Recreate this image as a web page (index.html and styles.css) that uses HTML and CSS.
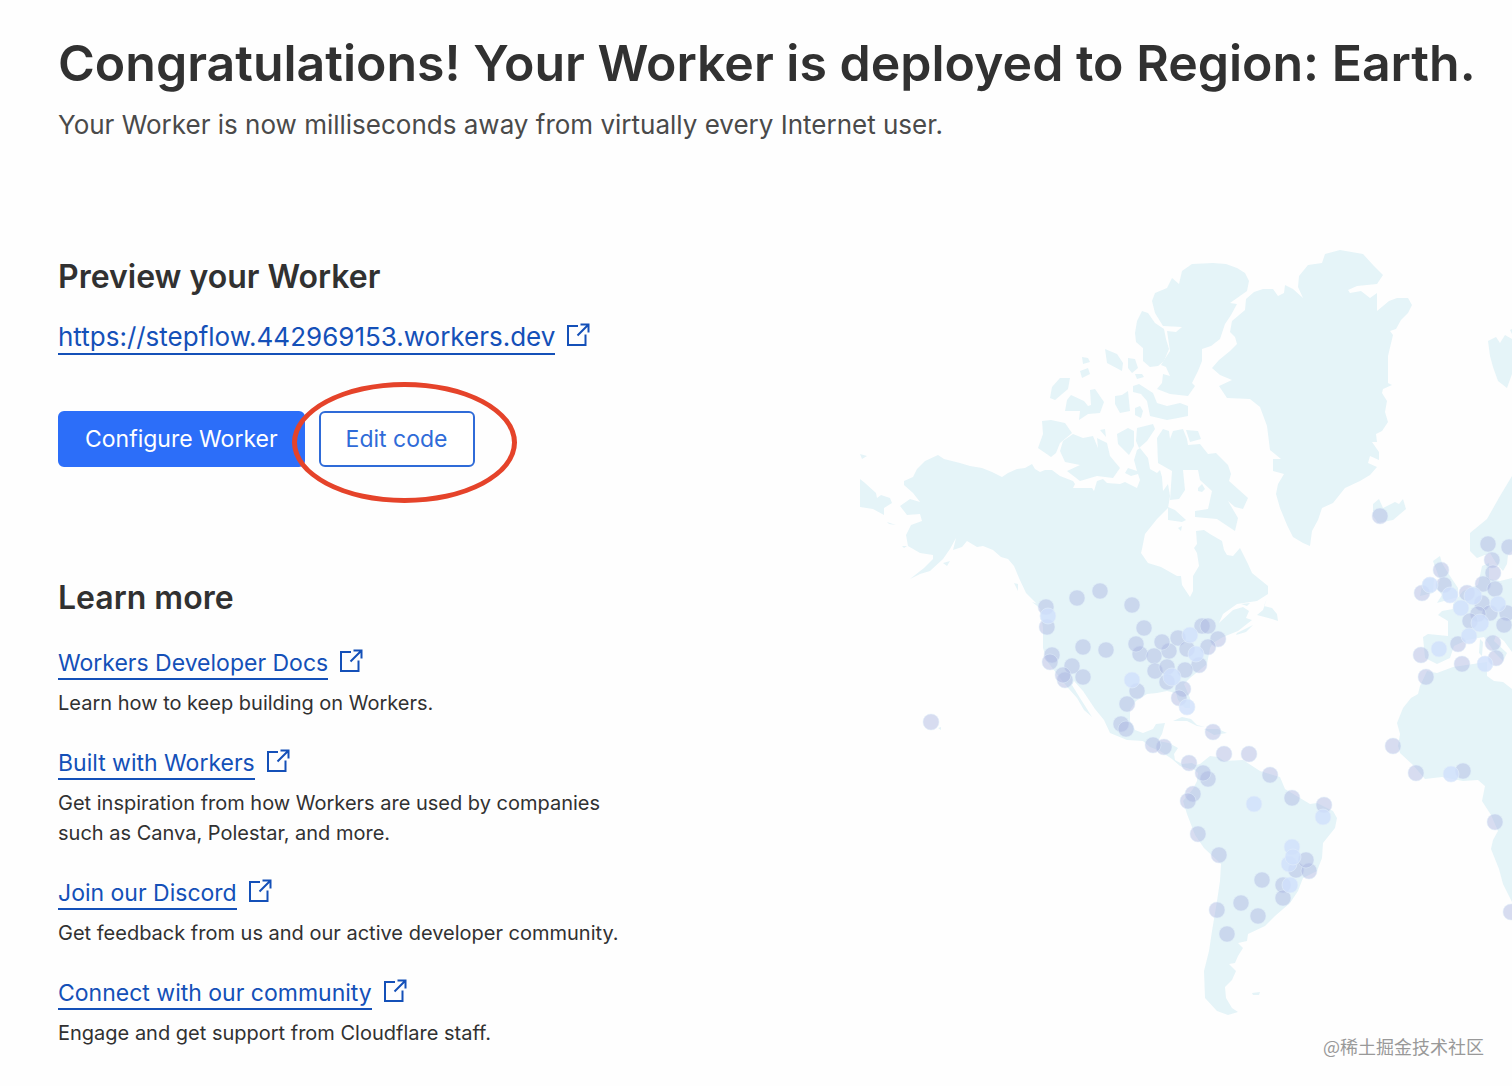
FILE: index.html
```
<!DOCTYPE html>
<html lang="en">
<head>
<meta charset="utf-8">
<meta name="viewport" content="width=device-width, initial-scale=1">
<title>Your Worker is deployed</title>
<link rel="stylesheet" href="styles.css">
</head>
<body>
<svg class="sprite" aria-hidden="true">
  <symbol id="external" viewBox="0 0 24 24">
    <path d="M12 3H2V22H19.500V11.500M14.500 1.500H22.500V9.500M22.500 1.500L11.500 12.500" fill="none" stroke="currentColor" stroke-width="2"/>
  </symbol>
</svg>
<header class="hero">
  <h1 class="hero-title">Congratulations! Your Worker is deployed to Region: Earth.</h1>
  <p class="hero-subtitle">Your Worker is now milliseconds away from virtually every Internet user.</p>
</header>
<main class="content">
  <div class="details">
    <section class="preview">
      <h2 class="section-title">Preview your Worker</h2>
      <a class="link link-large" href="#preview"><span class="link-text">https://stepflow.442969153.workers.dev</span><svg class="icon"><use href="#external"/></svg></a>
      <div class="actions">
        <button class="button button-primary" type="button">Configure Worker</button>
        <div class="highlighted">
          <button class="button button-outline" type="button">Edit code</button>
          <span class="highlight-ring"></span>
        </div>
      </div>
    </section>
    <section class="learn">
      <h2 class="section-title">Learn more</h2>
      <ul class="resources">
        <li class="resource">
          <a class="link" href="#docs"><span class="link-text">Workers Developer Docs</span><svg class="icon"><use href="#external"/></svg></a>
          <p class="resource-text">Learn how to keep building on Workers.</p>
        </li>
        <li class="resource">
          <a class="link" href="#built-with"><span class="link-text">Built with Workers</span><svg class="icon"><use href="#external"/></svg></a>
          <p class="resource-text">Get inspiration from how Workers are used by companies<br>such as Canva, Polestar, and more.</p>
        </li>
        <li class="resource">
          <a class="link" href="#discord"><span class="link-text">Join our Discord</span><svg class="icon"><use href="#external"/></svg></a>
          <p class="resource-text">Get feedback from us and our active developer community.</p>
        </li>
        <li class="resource">
          <a class="link" href="#community"><span class="link-text">Connect with our community</span><svg class="icon"><use href="#external"/></svg></a>
          <p class="resource-text">Engage and get support from Cloudflare staff.</p>
        </li>
      </ul>
    </section>
  </div>
  <div class="world">
    <svg class="map" viewBox="860 240 652 780" role="img" aria-label="Map of data centers">
      <g class="land">
        <!-- North and Central America -->
        <path d="M938 454L944 458L960 462L970 465L982 467L992 471L1002 476L1008 472L1017 468L1025 467L1032 463L1035 468L1040 471L1045 469L1052 469L1060 475L1073 480L1075 483L1073 487L1092 487L1094 490L1097 480L1103 478L1107 482L1120 483L1125 481L1137 487L1140 479L1138 473L1131 475L1125 472L1128 467L1137 470L1134 459L1137 449L1140 447L1148 457L1150 468L1157 472L1160 469L1162 476L1163 490L1168 483L1170 495L1168 507L1157 518L1145 533L1142 548L1141 552L1148 562L1161 566L1177 575L1181 575L1182 584L1190 596L1193 590L1193 575L1199 565L1197 552L1194 547L1197 543L1196 530L1204 529L1210 533L1222 540L1224 549L1227 554L1233 555L1240 547L1248 563L1252 572L1268 585L1268 593L1257 600L1237 603L1223 613L1219 622L1233 609L1243 606L1249 610L1246 617L1252 619L1238 630L1223 636L1213 642L1210 647L1207 663L1190 677L1184 683L1190 697L1190 707L1185 707L1178 699L1176 692L1167 690L1157 692L1147 693L1136 700L1130 709L1130 720L1135 729L1143 732L1153 728L1156 723L1165 722L1162 733L1158 740L1169 742L1178 747L1174 753L1175 759L1182 763L1192 762L1199 766L1190 768L1180 765L1172 758L1160 750L1150 746L1143 740L1127 739L1110 732L1104 719L1095 708L1083 690L1074 680L1072 684L1080 697L1087 708L1092 716L1084 709L1077 697L1069 688L1060 677L1047 660L1043 647L1043 627L1040 607L1035 601L1026 592L1019 577L1014 565L1008 558L1001 556L993 549L983 545L977 546L967 540L962 546L953 549L956 537L950 548L943 558L930 570L920 573L910 578L924 567L933 558L933 554L920 552L908 545L906 534L911 524L922 520L920 513L907 514L900 505L910 498L920 501L913 492L904 484L904 480L913 476L917 468L925 460Z"/>
        <path d="M1267 597L1264 605L1272 607L1277 613L1278 620L1272 618L1257 614L1263 609ZM1237 632L1253 624L1246 631L1236 634ZM1241 603L1250 602L1247 605ZM1168 506L1175 509L1186 519L1182 521L1168 519ZM1178 527L1182 525L1181 530ZM1198 487L1202 483L1205 488L1202 491L1198 490Z"/>
        <!-- Arctic islands -->
        <path d="M1152 300L1155 292L1167 287L1172 277L1179 283L1182 270L1192 263L1213 262L1226 263L1237 267L1245 272L1249 280L1247 290L1230 302L1237 303L1231 314L1225 323L1220 338L1211 345L1202 348L1202 360L1198 370L1192 382L1195 385L1188 395L1170 393L1157 388L1162 382L1163 373L1170 375L1166 366L1161 364L1170 350L1167 330L1176 331L1182 326L1163 325L1155 312Z"/>
        <path d="M1142 310L1148 312L1155 322L1164 328L1166 338L1169 348L1164 360L1158 365L1150 366L1143 360L1143 347L1136 341L1135 332L1137 320Z"/>
        <path d="M1133 385L1139 383L1153 392L1157 402L1167 405L1180 402L1188 405L1188 415L1178 417L1167 419L1150 415L1147 400L1141 393L1133 391Z"/>
        <path d="M1157 437L1163 428L1169 430L1170 438L1173 430L1183 428L1187 438L1188 444L1200 443L1208 453L1216 452L1228 464L1231 473L1229 480L1248 497L1243 508L1235 506L1228 500L1238 517L1235 530L1217 518L1195 516L1195 510L1208 508L1212 490L1200 479L1198 469L1183 469L1185 489L1179 498L1170 499L1172 470L1158 462ZM1186 429L1198 430L1201 438L1190 441Z"/>
        <path d="M1042 420L1051 419L1065 422L1072 432L1060 442L1056 452L1051 456L1038 447L1043 433Z"/>
        <path d="M1073 433L1083 437L1093 435L1098 447L1097 437L1103 440L1107 442L1110 455L1120 467L1113 477L1097 475L1080 480L1067 470L1080 464L1065 461L1060 450L1063 440ZM1100 429L1105 428L1106 436Z"/>
        <path d="M1050 397L1052 386L1060 377L1070 377L1068 388L1055 399ZM1065 410L1067 399L1071 394L1084 400L1088 405L1091 404L1090 389L1095 388L1104 401L1100 412L1088 413L1079 419L1080 410ZM1105 348L1117 353L1123 362L1122 370L1107 362ZM1128 357L1135 358L1138 367L1132 372L1128 367ZM1080 370L1088 367L1090 373L1082 377ZM1082 356L1088 357L1090 361L1083 363ZM1135 373L1142 373L1144 376L1137 378ZM1115 395L1122 394L1128 390L1130 410L1120 412L1115 403ZM1135 407L1140 405L1143 410L1141 417L1135 414ZM1137 427L1153 423L1155 428L1147 440L1139 447L1136 440ZM1117 433L1128 427L1134 430L1134 445L1129 454L1118 443Z"/>
        <!-- Greenland and Iceland -->
        <path d="M1212 367L1219 359L1230 350L1237 343L1235 336L1230 331L1232 320L1245 309L1246 298L1254 291L1263 288L1273 288L1278 295L1284 292L1285 284L1293 288L1303 297L1298 286L1299 275L1308 264L1322 262L1325 253L1340 249L1363 253L1374 265L1383 274L1377 283L1357 285L1348 289L1350 292L1361 290L1370 297L1377 292L1377 310L1389 300L1397 297L1408 297L1412 304L1408 312L1401 319L1396 328L1390 330L1393 334L1388 355L1388 382L1392 384L1383 388L1382 392L1387 400L1385 411L1388 421L1382 430L1376 433L1377 441L1372 441L1379 451L1379 459L1370 455L1368 462L1377 466L1370 474L1360 480L1345 487L1333 502L1322 507L1318 519L1312 530L1310 545L1303 542L1293 536L1287 524L1280 507L1276 493L1278 483L1284 473L1273 470L1273 458L1281 458L1270 449L1267 425L1260 406L1250 398L1227 397L1219 385L1232 379L1220 374Z"/>
        <path d="M1373 503L1379 498L1383 507L1395 501L1399 503L1403 498L1406 508L1393 519L1378 522L1373 515Z"/>
        <!-- South America and Caribbean -->
        <path d="M1190 765L1200 763L1210 755L1218 756L1224 760L1243 759L1260 770L1273 774L1280 776L1285 788L1300 797L1310 803L1317 802L1333 810L1337 817L1335 827L1323 842L1322 857L1317 870L1303 877L1298 890L1290 902L1275 915L1265 925L1248 933L1247 940L1238 942L1243 947L1238 955L1235 962L1229 963L1236 970L1232 979L1225 986L1226 997L1232 1007L1238 1011L1228 1014L1217 1010L1205 997L1204 970L1209 950L1212 930L1217 900L1220 880L1221 863L1204 847L1195 834L1187 813L1183 800L1193 788L1197 780L1198 772Z"/>
        <path d="M1173 720L1182 716L1191 718L1197 724L1205 726L1197 725L1187 720ZM1204 728L1218 728L1227 732L1214 734ZM1252 992L1260 991L1259 994L1253 994ZM938 727L941 726L941 729Z"/>
        <!-- Siberia and Aleutians -->
        <path d="M860 478L865 482L876 492L877 497L881 494L890 497L892 502L884 507L884 514L873 508L860 506ZM860 453L867 455L862 458ZM887 521L896 524L889 523ZM902 545L907 545L904 547ZM943 562L950 560L947 565ZM1014 582L1018 583L1018 590ZM1032 601L1038 603L1041 608Z"/>
        <!-- Europe -->
        <path d="M1488 340L1496 336L1500 342L1505 334L1512 338V373L1507 387L1498 380L1493 366L1490 355ZM1510 329L1512 328V333Z"/>
        <path d="M1512 475L1500 495L1487 518L1470 532L1470 550L1477 557L1490 552L1496 562L1503 570L1507 563L1508 554L1512 550Z"/>
        <path d="M1482 565L1489 562L1489 578L1500 580L1512 577V651L1504 640L1496 634L1494 640L1507 652L1503 660L1495 652L1484 636L1467 639L1454 645L1450 657L1437 663L1425 657L1423 636L1428 633L1448 635L1448 620L1438 614L1442 610L1453 608L1453 603L1463 590L1478 584ZM1480 638L1483 641L1482 655L1479 652Z"/>
        <path d="M1433 560L1440 555L1442 562L1448 572L1458 587L1458 596L1437 602L1442 594L1436 587L1440 579ZM1425 578L1434 577L1433 592L1420 595L1422 585Z"/>
        <!-- Africa -->
        <path d="M1420 685L1427 670L1437 672L1453 666L1473 663L1487 661L1487 675L1494 680L1503 681L1512 688V901L1503 883L1499 868L1491 848L1493 839L1498 830L1491 814L1482 800L1485 785L1478 779L1463 780L1442 776L1425 778L1413 764L1400 752L1398 745L1400 733L1397 722L1403 707L1411 697L1418 693Z"/>
      </g>
      <g class="sites">
        <circle cx="931" cy="721" r="8"/><circle cx="1046" cy="606" r="8"/><circle cx="1047" cy="626" r="8"/><circle cx="1077" cy="597" r="8"/><circle cx="1100" cy="590" r="8"/><circle cx="1132" cy="604" r="8"/><circle cx="1144" cy="627" r="8"/><circle cx="1083" cy="646" r="8"/><circle cx="1106" cy="649" r="8"/><circle cx="1052" cy="654" r="8"/><circle cx="1050" cy="661" r="8"/><circle cx="1072" cy="665" r="8"/><circle cx="1065" cy="679" r="8"/><circle cx="1063" cy="674" r="8"/><circle cx="1083" cy="676" r="8"/>
        <circle cx="1140" cy="653" r="8"/><circle cx="1136" cy="643" r="8"/><circle cx="1169" cy="650" r="8"/><circle cx="1162" cy="641" r="8"/><circle cx="1154" cy="655" r="8"/><circle cx="1178" cy="637" r="8"/><circle cx="1202" cy="625" r="8"/><circle cx="1208" cy="625" r="8"/><circle cx="1218" cy="638" r="8"/><circle cx="1187" cy="648" r="8"/><circle cx="1199" cy="664" r="8"/><circle cx="1208" cy="646" r="8"/><circle cx="1185" cy="669" r="8"/><circle cx="1155" cy="670" r="8"/><circle cx="1167" cy="666" r="8"/><circle cx="1167" cy="681" r="8"/><circle cx="1137" cy="690" r="8"/><circle cx="1127" cy="703" r="8"/><circle cx="1183" cy="688" r="8"/><circle cx="1179" cy="697" r="8"/>
        <circle cx="1121" cy="723" r="8"/><circle cx="1126" cy="728" r="8"/><circle cx="1164" cy="746" r="8"/><circle cx="1153" cy="744" r="8"/><circle cx="1213" cy="731" r="8"/><circle cx="1189" cy="762" r="8"/><circle cx="1224" cy="753" r="8"/><circle cx="1249" cy="753" r="8"/><circle cx="1208" cy="778" r="8"/><circle cx="1203" cy="772" r="8"/><circle cx="1270" cy="774" r="8"/><circle cx="1193" cy="793" r="8"/><circle cx="1188" cy="800" r="8"/><circle cx="1292" cy="797" r="8"/><circle cx="1324" cy="804" r="8"/><circle cx="1198" cy="833" r="8"/><circle cx="1219" cy="854" r="8"/><circle cx="1296" cy="869" r="8"/><circle cx="1309" cy="870" r="8"/><circle cx="1306" cy="859" r="8"/><circle cx="1262" cy="879" r="8"/><circle cx="1283" cy="884" r="8"/><circle cx="1283" cy="897" r="8"/><circle cx="1241" cy="902" r="8"/><circle cx="1258" cy="915" r="8"/><circle cx="1217" cy="909" r="8"/><circle cx="1227" cy="933" r="8"/>
        <circle cx="1380" cy="515" r="8"/><circle cx="1488" cy="543" r="8"/><circle cx="1509" cy="546" r="8"/><circle cx="1492" cy="559" r="8"/><circle cx="1493" cy="572" r="8"/><circle cx="1441" cy="569" r="8"/><circle cx="1422" cy="592" r="8"/><circle cx="1444" cy="584" r="8"/><circle cx="1483" cy="583" r="8"/><circle cx="1495" cy="588" r="8"/><circle cx="1467" cy="592" r="8"/><circle cx="1482" cy="602" r="8"/><circle cx="1490" cy="612" r="8"/><circle cx="1507" cy="612" r="8"/><circle cx="1478" cy="613" r="8"/><circle cx="1470" cy="620" r="8"/><circle cx="1504" cy="624" r="8"/><circle cx="1458" cy="643" r="8"/><circle cx="1493" cy="642" r="8"/><circle cx="1421" cy="654" r="8"/><circle cx="1496" cy="657" r="8"/><circle cx="1462" cy="663" r="8"/><circle cx="1426" cy="676" r="8"/>
        <circle cx="1393" cy="745" r="8"/><circle cx="1416" cy="772" r="8"/><circle cx="1463" cy="770" r="8"/><circle cx="1495" cy="821" r="8"/><circle cx="1511" cy="911" r="8"/>
      </g>
      <g class="sites-light">
        <circle cx="1048" cy="615" r="8"/><circle cx="1190" cy="634" r="8"/><circle cx="1196" cy="653" r="8"/><circle cx="1172" cy="676" r="9"/><circle cx="1132" cy="679" r="8"/><circle cx="1187" cy="706" r="8"/><circle cx="1254" cy="803" r="8"/><circle cx="1323" cy="816" r="8"/><circle cx="1292" cy="846" r="8"/><circle cx="1289" cy="863" r="8"/><circle cx="1293" cy="856" r="8"/><circle cx="1290" cy="884" r="8"/>
        <circle cx="1430" cy="584" r="8"/><circle cx="1450" cy="594" r="8"/><circle cx="1461" cy="607" r="8"/><circle cx="1473" cy="595" r="9"/><circle cx="1498" cy="603" r="8"/><circle cx="1480" cy="622" r="9"/><circle cx="1469" cy="635" r="8"/><circle cx="1439" cy="648" r="8"/><circle cx="1485" cy="663" r="8"/><circle cx="1451" cy="773" r="8"/>
      </g>
    </svg>
    <p class="credit" lang="zh">@稀土掘金技术社区</p>
  </div>
</main>
</body>
</html>
```
FILE: styles.css
```
* {
  box-sizing: border-box;
}

body {
  margin: 0;
  background: #fefefe;
  color: #313131;
  font-family: Inter, "Liberation Sans", sans-serif;
}

h1, h2, p, ul {
  margin: 0;
  padding: 0;
}

.sprite {
  display: none;
}

.hero {
  display: flex;
  flex-direction: column;
  gap: 10px;
  padding: 31px 20px 0 58px;
}

.hero-title {
  font-size: 50px;
  font-weight: 600;
  line-height: 64px;
}

.hero-subtitle {
  color: #4a4a4a;
  font-size: 26px;
  line-height: 40px;
}

.content {
  display: grid;
  grid-template-columns: minmax(0, 802fr) minmax(0, 652fr);
  padding: 96px 0 16px 58px;
}

.details {
  display: flex;
  flex-direction: column;
  gap: 111px;
  padding-top: 16px;
}

.section-title {
  font-size: 32px;
  font-weight: 600;
  line-height: 40px;
}

.link {
  display: flex;
  align-items: center;
  gap: 11px;
  width: fit-content;
  color: #1450b8;
  font-size: 23px;
  line-height: 30px;
  text-decoration: none;
}

.link-text {
  border-bottom: 2px solid currentColor;
}

.link-large {
  margin-top: 24px;
  font-size: 26px;
  line-height: 32px;
}

.icon {
  width: 24px;
  height: 24px;
  margin-bottom: 6px;
  overflow: visible;
}

.actions {
  display: flex;
  gap: 14px;
  margin-top: 56px;
}

.button {
  height: 56px;
  padding: 0 25px;
  border: 2px solid #2c6ef9;
  border-radius: 6px;
  font-family: inherit;
  font-size: 23px;
  line-height: 32px;
}

.button-primary {
  background: #2c6ef9;
  color: #fff;
}

.button-outline {
  border-color: #2f6bd8;
  background: #fff;
  color: #2f6bd8;
}

.highlighted {
  position: relative;
}

.highlight-ring {
  position: absolute;
  inset: -29px -42px -36px -27px;
  border: 5px solid #e5432a;
  border-radius: 50%;
  pointer-events: none;
}

.resources {
  display: flex;
  flex-direction: column;
  gap: 30px;
  margin-top: 30px;
  list-style: none;
}

.resource {
  display: flex;
  flex-direction: column;
  gap: 8px;
}

.resource-text {
  font-size: 20px;
  line-height: 30px;
}

.world {
  display: flex;
  flex-direction: column;
  gap: 12px;
}

.map {
  width: 100%;
  height: auto;
}

.land {
  fill: #e5f4f8;
}

.sites {
  fill: #a9b4e1;
  fill-opacity: 0.45;
  stroke: #e2effa;
  stroke-opacity: 0.5;
}

.sites-light {
  fill: #cfe0fb;
  fill-opacity: 0.8;
  stroke: #e2effa;
  stroke-opacity: 0.6;
}

.credit {
  padding-right: 28px;
  color: #999;
  font-family: "Noto Sans CJK SC", sans-serif;
  font-size: 18px;
  line-height: 26px;
  text-align: right;
}
```
